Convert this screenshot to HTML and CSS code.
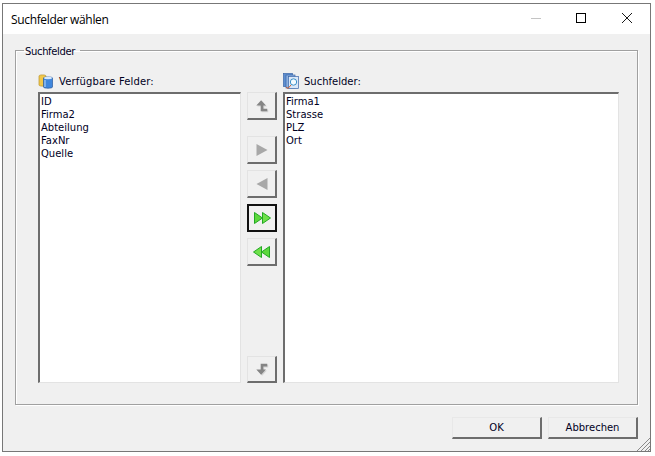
FILE: index.html
```html
<!DOCTYPE html>
<html lang="en">
<head>
    <meta charset="UTF-8">
    <title>Suchfelder wählen</title>
    <link rel="stylesheet" href="styles.css">
</head>
<body>
    <div class="window">
        <div class="titlebar">
            <span class="title">Suchfelder wählen</span>
            <div class="caption-buttons">
                <svg class="caption-icon caption-min" viewBox="0 0 10 10"><path d="M0 5.5H10" stroke="#c4c4c4" fill="none"/></svg>
                <svg class="caption-icon" viewBox="0 0 10 10"><rect x="0.5" y="0.5" width="9" height="9" stroke="#000" fill="none"/></svg>
                <svg class="caption-icon" viewBox="0 0 10 10"><path d="M0 0L10 10M10 0L0 10" stroke="#000" stroke-width="0.9" fill="none"/></svg>
            </div>
        </div>
        <div class="content">
            <fieldset class="group">
                <legend>Suchfelder</legend>
                <div class="lists">
                    <div class="list-column list-left">
                        <div class="list-label">
                            <svg class="label-icon" viewBox="0 0 16 16">
                                <path d="M1 3C1 1.500 8 1.500 8 3V12C8 13.500 1 13.500 1 12Z" fill="#f2c84a" stroke="#b8922c" stroke-width="0.7"/>
                                <path d="M5.500 5C5.500 3.600 14.500 3.600 14.500 5V14C14.500 15.600 5.500 15.600 5.500 14Z" fill="#3f86dc" stroke="#2a5a9c" stroke-width="0.7"/>
                                <ellipse cx="10" cy="5" rx="4" ry="1.200" fill="#d4e6fa"/>
                                <path d="M7 7V14" stroke="#a8cdf5" stroke-width="1.200"/>
                            </svg>
                            <span>Verfügbare Felder:</span>
                        </div>
                        <div class="listbox">
                            <div>ID</div>
                            <div>Firma2</div>
                            <div>Abteilung</div>
                            <div>FaxNr</div>
                            <div>Quelle</div>
                        </div>
                    </div>
                    <div class="mover">
                        <button class="tool-btn up-btn">
                            <svg class="gray-icon" viewBox="0 0 16 16"><path d="M7 1.500L12.500 7.500H9.500V11H14V14H6.500V7.500H1.500Z" fill="#858585"/></svg>
                        </button>
                        <button class="tool-btn play-btn">
                            <svg viewBox="0 0 12 12"><path d="M0.500 0L11.500 6L0.500 12Z" fill="#a8a8a8"/></svg>
                        </button>
                        <button class="tool-btn back-btn">
                            <svg viewBox="0 0 12 12"><path d="M11.500 0L0.500 6L11.500 12Z" fill="#a8a8a8"/></svg>
                        </button>
                        <button class="tool-btn focused ff-btn">
                            <svg viewBox="0 0 17 12"><path d="M0.500 0.500L8.500 6L0.500 11.500Z" fill="#5cd83c" stroke="#22a822"/><path d="M8.500 0.500L16.500 6L8.500 11.500Z" fill="#6ee04a" stroke="#22a822"/></svg>
                        </button>
                        <button class="tool-btn rw-btn">
                            <svg viewBox="0 0 17 12"><path d="M16.500 0.500L8.500 6L16.500 11.500Z" fill="#5cd83c" stroke="#22a822"/><path d="M8.500 0.500L0.500 6L8.500 11.500Z" fill="#6ee04a" stroke="#22a822"/></svg>
                        </button>
                        <button class="tool-btn down-btn">
                            <svg class="gray-icon" viewBox="0 0 16 16"><path d="M7 14.500L12.500 8.500H9.500V5H14V2H6.500V8.500H1.500Z" fill="#858585"/></svg>
                        </button>
                    </div>
                    <div class="list-column list-right">
                        <div class="list-label">
                            <svg class="label-icon" viewBox="0 0 16 16">
                                <rect x="0.500" y="0.500" width="9" height="13" fill="#5f8fd0" stroke="#3a66a8" stroke-width="0.7"/>
                                <rect x="3" y="2" width="9" height="13" fill="#8fb2e0" stroke="#3a66a8" stroke-width="0.7"/>
                                <rect x="5.500" y="3.500" width="10" height="12" fill="#dbe8f8" stroke="#3a66a8" stroke-width="0.7"/>
                                <circle cx="10.500" cy="9" r="3.200" fill="#f4fbff" stroke="#3a90c8"/>
                                <path d="M3 14L5 15.500L8 12" stroke="#d06030" fill="none"/>
                            </svg>
                            <span>Suchfelder:</span>
                        </div>
                        <div class="listbox">
                            <div>Firma1</div>
                            <div>Strasse</div>
                            <div>PLZ</div>
                            <div>Ort</div>
                        </div>
                    </div>
                </div>
            </fieldset>
            <div class="footer">
                <button class="dlg-btn">OK</button>
                <button class="dlg-btn">Abbrechen</button>
            </div>
            <svg class="grip" viewBox="0 0 14 14"><path d="M14 1L1 14M14 5L5 14M14 9L9 14M14 12L12 14" stroke="#8a8a8a" fill="none"/></svg>
        </div>
    </div>
</body>
</html>
```

FILE: styles.css
```css
/* General Reset */
* {
    margin: 0;
    padding: 0;
    box-sizing: border-box;
}

body {
    background-color: #ffffff;
    font-family: "DejaVu Sans", sans-serif;
    font-size: 10px;
    color: #00001e;
}

/* Window frame */
.window {
    width: 649px;
    height: 449px;
    margin: 3px 0 0 2px;
    border: 1px solid #777777;
    display: flex;
    flex-direction: column;
    background-color: #f0f0f0;
}

.titlebar {
    height: 30px;
    flex: none;
    background-color: #ffffff;
    display: flex;
    align-items: center;
    justify-content: space-between;
    padding-left: 8px;
}

.title {
    font-family: "Open Sans", sans-serif;
    font-size: 12px;
    letter-spacing: -0.35px;
    color: #000000;
}

.caption-buttons {
    display: flex;
    gap: 36px;
    padding: 0 18px 2px 0;
}

.caption-icon {
    width: 10px;
    height: 10px;
    display: block;
}

.caption-min {
    margin-right: -1px;
}

.content {
    position: relative;
    flex: 1;
    display: flex;
    flex-direction: column;
    padding: 8px 12px 0 12px;
}

/* Group box */
.group {
    height: 363px;
    flex: none;
    border: 1px solid #a0a0a0;
    box-shadow: 1px 1px 0 #ffffff, inset 1px 1px 0 #ffffff;
    padding: 0 17px 0 22px;
}

.group legend {
    margin-left: -14px;
    padding: 4px 5px 0 1px;
    font-size: 10px;
    line-height: 12px;
    letter-spacing: -0.35px;
}

.lists {
    display: flex;
    margin-top: 14px;
}

.list-column {
    display: flex;
    flex-direction: column;
}

.list-left {
    width: 203px;
}

.list-left .list-label {
    letter-spacing: 0.15px;
}

.list-right {
    width: 336px;
}

.list-label {
    height: 20px;
    display: flex;
    align-items: center;
    gap: 5px;
    padding-bottom: 2px;
}

.label-icon {
    width: 16px;
    height: 16px;
    flex: none;
}

.listbox {
    height: 291px;
    background-color: #ffffff;
    border-top: 2px solid #6d6d6d;
    border-left: 2px solid #6d6d6d;
    border-right: 1px solid #e3e3e3;
    border-bottom: 1px solid #e3e3e3;
    padding-left: 1px;
    padding-top: 1px;
    line-height: 13px;
}

/* Middle button column */
.mover {
    width: 42px;
    padding: 20px 6px 0 6px;
    display: flex;
    flex-direction: column;
}

.tool-btn {
    width: 30px;
    height: 28px;
    flex: none;
    display: flex;
    align-items: center;
    justify-content: center;
    background-color: #f0f0f0;
    border: 1px solid #ffffff;
    border-right: 2px solid #6d6d6d;
    border-bottom: 2px solid #6d6d6d;
    border-top-color: #e3e3e3;
    border-left-color: #e3e3e3;
}

.tool-btn svg {
    width: 12px;
    height: 12px;
    display: block;
}

.tool-btn .gray-icon {
    width: 14px;
    height: 14px;
    filter: drop-shadow(1px 1px 0 #d4d4d4);
}

.play-btn {
    margin-top: 16px;
}

.back-btn,
.ff-btn,
.rw-btn {
    margin-top: 6px;
}

.tool-btn.ff-btn svg,
.tool-btn.rw-btn svg {
    width: 17px;
    height: 12px;
}

.down-btn {
    margin-top: 90px;
    height: 27px;
}

.focused {
    border: 2px solid #111111;
}

/* Footer buttons */
.footer {
    display: flex;
    justify-content: flex-end;
    gap: 6px;
    margin-top: 12px;
}

.dlg-btn {
    width: 90px;
    height: 22px;
    font-family: "DejaVu Sans", sans-serif;
    font-size: 10px;
    color: #00001e;
    background-color: #f0f0f0;
    border: 1px solid #e8e8e8;
    border-right: 2px solid #6d6d6d;
    border-bottom: 2px solid #6d6d6d;
}

.grip {
    position: absolute;
    right: 0;
    bottom: 0;
    width: 14px;
    height: 14px;
}
```
